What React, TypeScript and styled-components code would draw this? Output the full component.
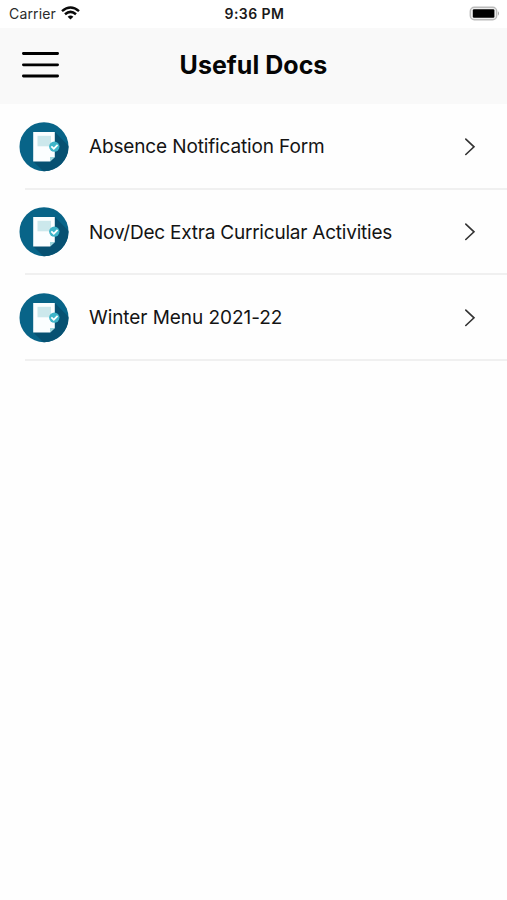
import React from "react";
import styled, { createGlobalStyle } from "styled-components";

const GlobalStyle = createGlobalStyle`
  * { box-sizing: border-box; }
  body {
    margin: 0;
    background: #fff;
    color: #111;
    font-family: Inter, "Liberation Sans", sans-serif;
  }
`;

const Screen = styled.div`
  width: 507px;
  height: 900px;
  overflow: hidden;
  background: #fefefe;
`;

const StatusBar = styled.div`
  display: grid;
  grid-template-columns: 1fr auto 1fr;
  align-items: center;
  height: 28px;
  padding: 0 7px 0 9px;
  background: #fff;
`;

const Carrier = styled.div`
  display: flex;
  align-items: center;
  gap: 5px;
  height: 26px;
  font-size: 14px;
  line-height: 28px;
  letter-spacing: 0.15px;
  color: #2b2b2b;

  svg {
    margin-bottom: 2px;
  }
`;

const Clock = styled.div`
  font-size: 14px;
  font-weight: 600;
  line-height: 28px;
  letter-spacing: 0.45px;
  color: #1a1a1a;
`;

const BatterySlot = styled.div`
  display: flex;
  justify-content: flex-end;
  height: 17px;
`;

const Header = styled.header`
  display: grid;
  grid-template-columns: 60px 1fr 60px;
  align-items: center;
  height: 76px;
  padding: 0 21px 2px;
  background: #f9f9f9;
`;

const MenuButton = styled.button`
  display: flex;
  padding: 0;
  border: 0;
  background: none;
`;

const Title = styled.h1`
  margin: 0;
  font-size: 25px;
  font-weight: 700;
  line-height: 30px;
  letter-spacing: 0.03px;
  text-align: center;
  color: #050505;
`;

const List = styled.ul`
  margin: 0;
  padding: 0;
  list-style: none;
`;

const Row = styled.li`
  display: flex;
  align-items: center;
  height: 85.5px;
  padding: 0 31px 0 19px;
  background: linear-gradient(#f0f0f0, #f0f0f0) 25px 100% / 100% 2px no-repeat;
`;

const Label = styled.span<{ $tracking: number }>`
  flex: 1;
  margin-left: 20px;
  font-size: 19px;
  line-height: 25px;
  letter-spacing: ${(p) => p.$tracking}px;
  white-space: nowrap;
  color: #141414;
`;

const Wifi = () => (
  <svg width="19" height="14" viewBox="0 0 19 14" fill="none" stroke="#0a0a0a" strokeWidth="2.5">
    <path d="M1 5.1Q9.5-2.1 18 5.1" />
    <path d="M4 8.3Q9.5 3.5 15 8.3" />
    <path d="M6.6 10.7Q9.5 8.3 12.4 10.7L9.5 13.6Z" fill="#0a0a0a" stroke="none" />
  </svg>
);

const Battery = () => (
  <svg width="31" height="15" viewBox="0 0 31 15">
    <rect x="1.3" y="1.2" width="26.4" height="12.6" rx="4" fill="#eee" stroke="#bbb" strokeWidth="1.4" />
    <rect x="3.8" y="3.2" width="21.6" height="8.6" rx="1.2" fill="#000" />
    <path d="M29 5.3Q31 7.5 29 9.7Z" fill="#a5a5a5" />
  </svg>
);

const MenuIcon = () => (
  <svg width="39" height="30" viewBox="0 0 39 30" stroke="#000" strokeWidth="2.8" strokeLinecap="round">
    <path d="M2.4 3.5H36.6M2.4 14.8H36.6M2.4 26H36.6" />
  </svg>
);

const DocIcon = () => (
  <svg width="50" height="50" viewBox="0 0 50 50">
    <defs>
      <clipPath id="disc">
        <circle cx="25" cy="24.7" r="24.5" />
      </clipPath>
    </defs>
    <circle cx="25" cy="24.7" r="24.5" fill="#086488" />
    <path d="M35.8 10L50 24.2V50H25L14.2 39.2Z" fill="#075172" clipPath="url(#disc)" />
    <path d="M14.2 10H35.8V35.1L31 39.5H14.2Z" fill="#fbfeff" />
    <path d="M31 39.5V35.1H35.8Z" fill="#9ad6dd" />
    <rect x="18.5" y="13.8" width="13.5" height="10.5" fill="#cce8ec" />
    <circle cx="35.3" cy="24.6" r="5.2" fill="#3fb5c9" />
    <path d="M32.3 24.3L34.8 26.7L38.6 22.9" fill="none" stroke="#fff" strokeWidth="1.7" />
  </svg>
);

const Chevron = () => (
  <svg width="12" height="18" viewBox="0 0 12 18" fill="none" stroke="#333" strokeWidth="1.6" strokeLinecap="round">
    <path d="M1.8 1.1L10 8.8L1.8 16.5" />
  </svg>
);

const docs = [
  { name: "Absence Notification Form", tracking: -0.14 },
  { name: "Nov/Dec Extra Curricular Activities", tracking: -0.22 },
  { name: "Winter Menu 2021-22", tracking: -0.06 },
];

export default function App() {
  return (
    <Screen>
      <GlobalStyle />
      <StatusBar>
        <Carrier>
          <span>Carrier</span>
          <Wifi />
        </Carrier>
        <Clock>9:36 PM</Clock>
        <BatterySlot>
          <Battery />
        </BatterySlot>
      </StatusBar>
      <Header>
        <MenuButton aria-label="Menu">
          <MenuIcon />
        </MenuButton>
        <Title>Useful Docs</Title>
      </Header>
      <List>
        {docs.map((doc) => (
          <Row key={doc.name}>
            <DocIcon />
            <Label $tracking={doc.tracking}>{doc.name}</Label>
            <Chevron />
          </Row>
        ))}
      </List>
    </Screen>
  );
}
